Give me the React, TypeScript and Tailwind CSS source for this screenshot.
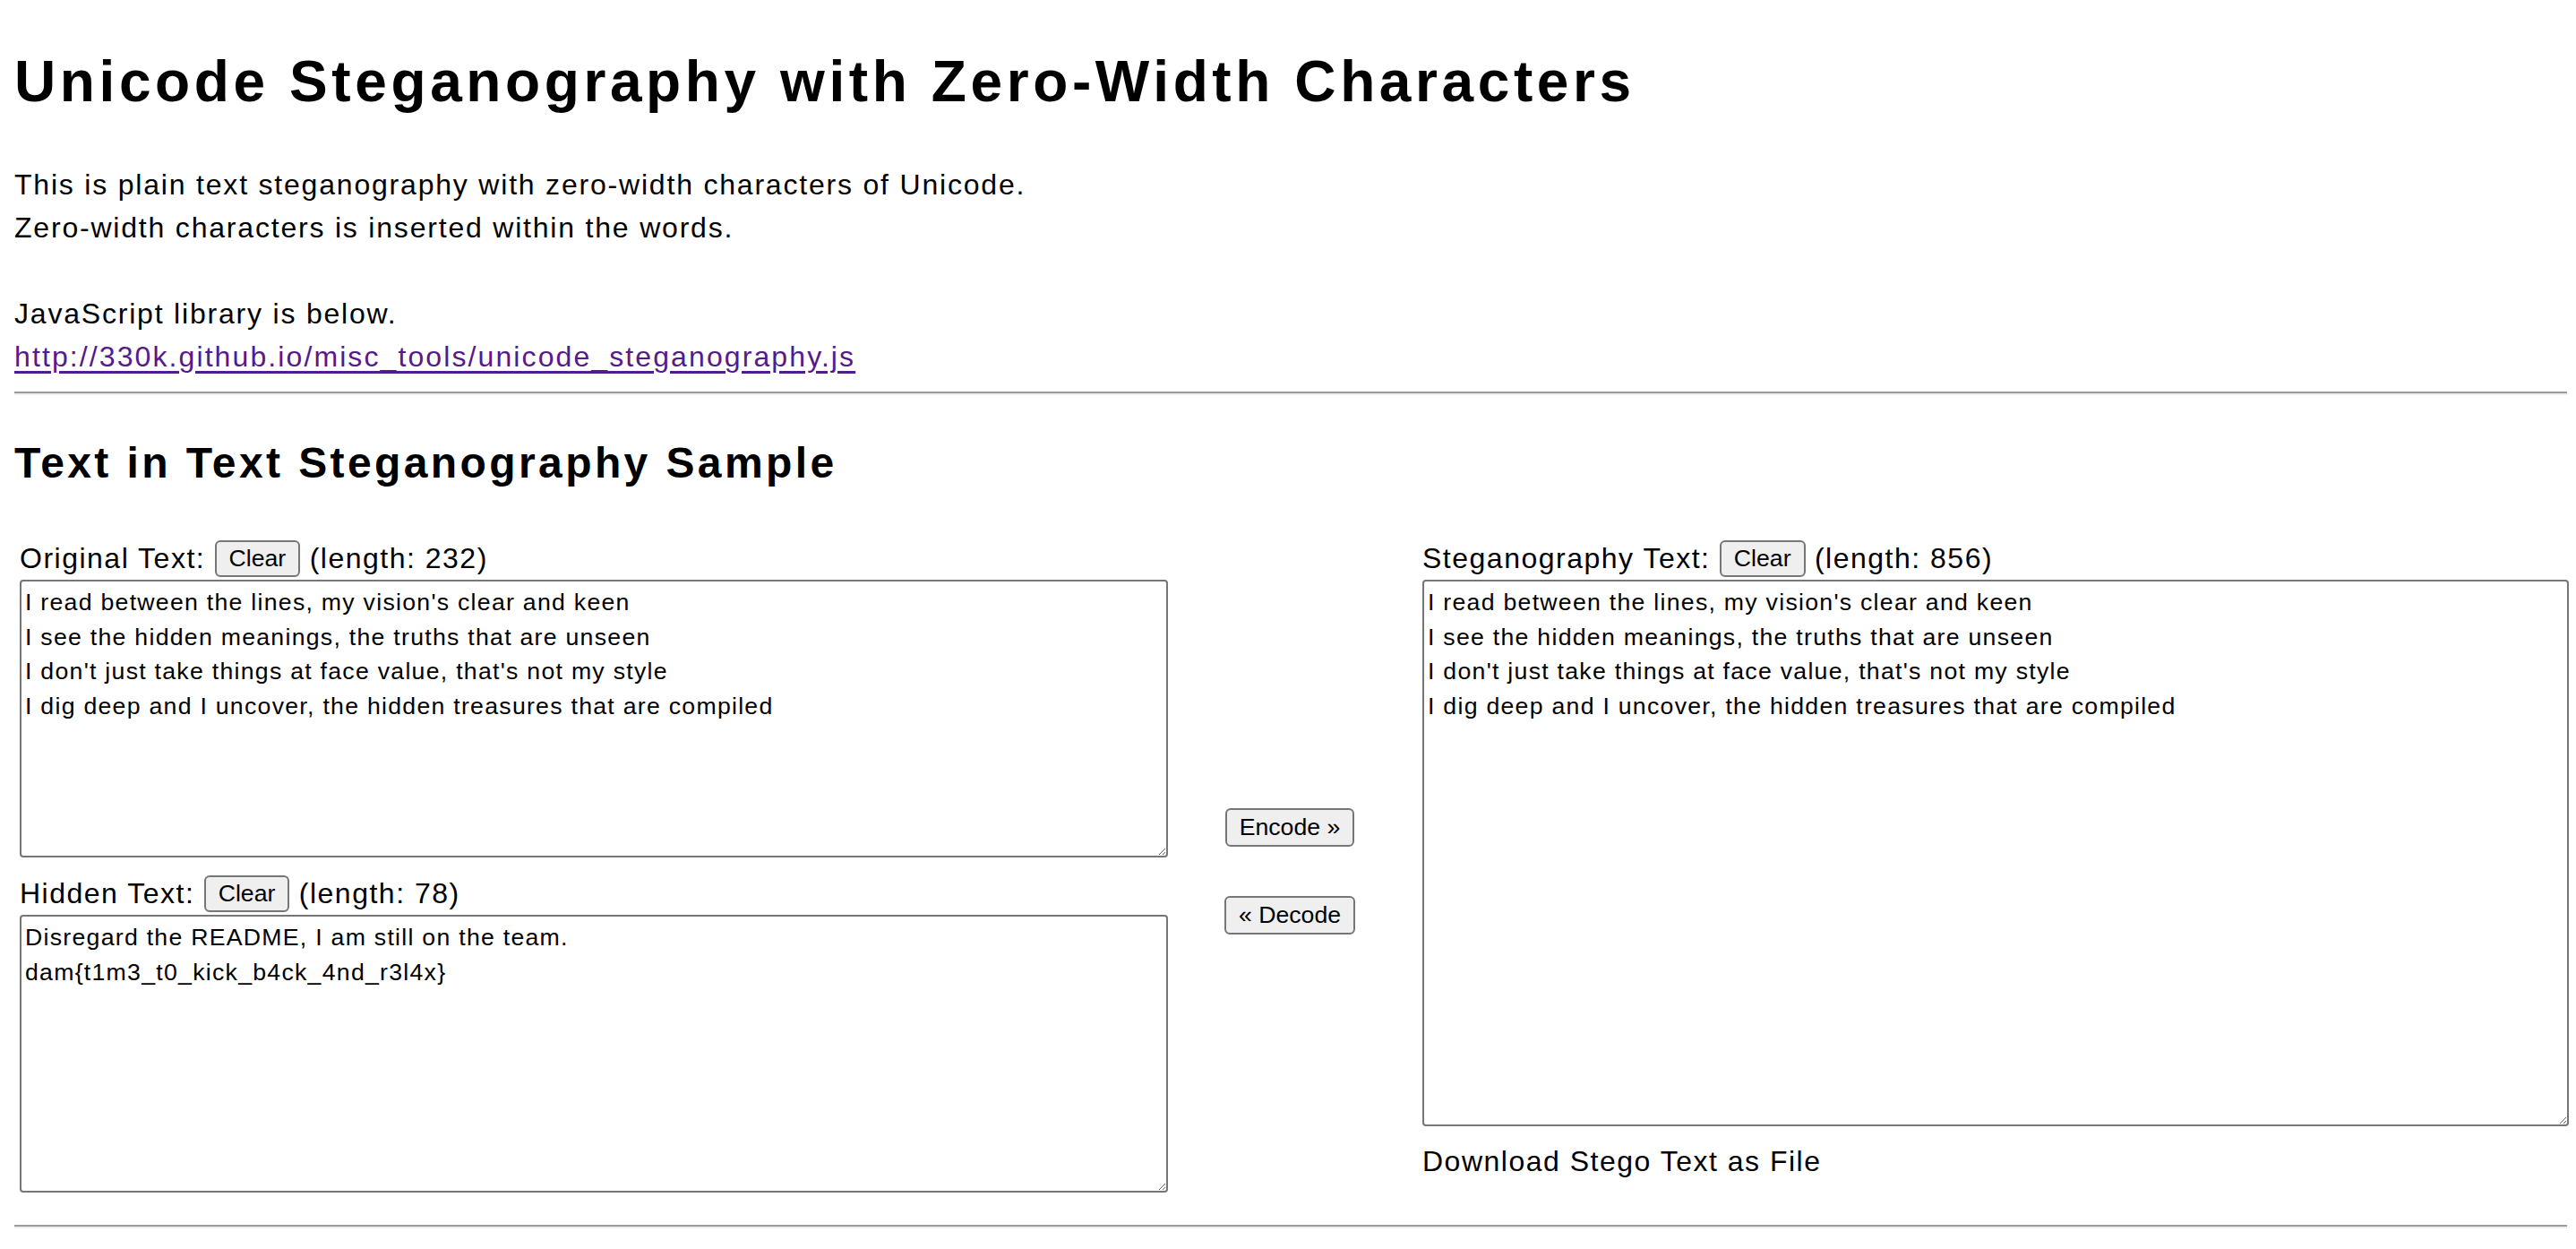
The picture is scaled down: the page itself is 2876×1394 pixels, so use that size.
import { useState } from 'react'

const originalText = `I read between the lines, my vision's clear and keen
I see the hidden meanings, the truths that are unseen
I don't just take things at face value, that's not my style
I dig deep and I uncover, the hidden treasures that are compiled`

const hiddenText = `Disregard the README, I am still on the team.
dam{t1m3_t0_kick_b4ck_4nd_r3l4x}`

function PlainButton({ children, className = '' }: { children: React.ReactNode; className?: string }) {
  return (
    <button
      type="button"
      className={`inline-flex shrink-0 items-center justify-center rounded-[6px] border-2 border-[#767676] bg-[#efefef] px-[14px] text-[26.67px] leading-none tracking-normal text-black ${className}`}
    >
      {children}
    </button>
  )
}

function Field({
  label,
  length,
  value,
  height,
  width,
}: {
  label: string
  length: number
  value: string
  height: string
  width: string
}) {
  const [text, setText] = useState(value)
  return (
    <div className="flex flex-col">
      <div className="flex h-[48px] items-center whitespace-pre tracking-[1.5px]">
        <span>{label} </span>
        <PlainButton className="h-[41px]">Clear</PlainButton>
        <span> (length: {length})</span>
      </div>
      <textarea
        value={text}
        onChange={(e) => setText(e.target.value)}
        spellCheck={false}
        className={`${height} ${width} rounded-[4px] border-2 border-[#767676] bg-white px-[4px] py-[4px] text-[26.67px] leading-[38.5px] tracking-[1.27px] text-black outline-none`}
      />
    </div>
  )
}

function Rule({ className = '' }: { className?: string }) {
  return (
    <hr
      className={`-mr-[6px] border-t-2 border-b-2 border-l-0 border-r-0 border-t-[#9a9a9a] border-b-[#eeeeee] ${className}`}
    />
  )
}

export default function App() {
  return (
    <div className="min-h-screen bg-white px-[16px] font-['Liberation_Sans',Arial,sans-serif] text-[32px] leading-[48px] text-black">
      <h1 className="pt-[43px] pb-[43px] text-[64px] leading-[96px] font-bold tracking-[4.6px]">
        Unicode Steganography with Zero-Width Characters
      </h1>

      <div className="tracking-[1.8px]">
        This is plain text steganography with zero-width characters of Unicode.
        <br />
        Zero-width characters is inserted within the words.
        <br />
        <br />
        JavaScript library is below.
        <br />
        <a href="#" className="tracking-[2.1px] text-[#551a8b] underline underline-offset-[5px]">
          http://330k.github.io/misc_tools/unicode_steganography.js
        </a>
      </div>

      <Rule className="mt-[15px]" />

      <h2 className="mt-[40px] mb-[40px] text-[48px] leading-[72px] font-bold tracking-[3.4px]">
        Text in Text Steganography Sample
      </h2>

      <div className="flex items-start pt-[6px] pl-[6px]">
        <div className="flex w-[1282px] shrink-0 flex-col gap-[16px]">
          <Field label="Original Text:" length={232} value={originalText} height="h-[310px]" width="w-[1282px]" />
          <Field label="Hidden Text:" length={78} value={hiddenText} height="h-[310px]" width="w-[1282px]" />
        </div>

        <div className="flex w-[284px] shrink-0 flex-col items-center pt-[303px] pr-[12px]">
          <PlainButton className="h-[43px]">Encode »</PlainButton>
          <PlainButton className="mt-[55px] h-[43px]">« Decode</PlainButton>
        </div>

        <div className="flex w-[1280px] shrink-0 flex-col">
          <Field label="Steganography Text:" length={856} value={originalText} height="h-[610px]" width="w-[1280px]" />
          <div className="mt-[15px] tracking-[1.5px]">Download Stego Text as File</div>
        </div>
      </div>

      <Rule className="mt-[36px]" />
    </div>
  )
}
